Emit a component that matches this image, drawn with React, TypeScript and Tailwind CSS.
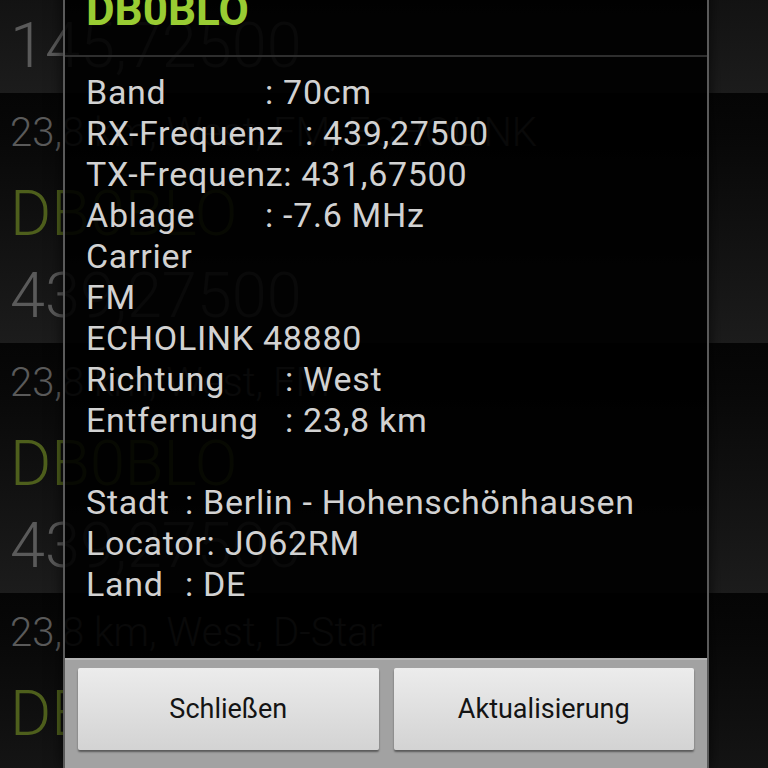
import { FC } from "react";

interface RowProps {
  info: string;
  call: string;
  freq: string;
}

const ListRow: FC<RowProps> = ({ info, call, freq }) => (
  <div className="h-[250px] shrink-0 pl-[10px] bg-gradient-to-b from-[#050505] to-[#1c1c1c] font-light whitespace-nowrap">
    <div className="h-[80px] leading-[80px] text-[40px] text-[#5a5a5a]">{info}</div>
    <div className="h-[82px] leading-[82px] text-[63px] text-[#4e5f1c]">{call}</div>
    <div className="h-[82px] leading-[82px] text-[63px] text-[#5a5a5a]">{freq}</div>
  </div>
);

const rows: RowProps[] = [
  { info: "23,8 km, West, FM", call: "DB0BLO", freq: "145,72500" },
  { info: "23,8 km, West, FM, ECHOLINK", call: "DB0BLO", freq: "439,27500" },
  { info: "23,8 km, West, FM", call: "DB0BLO", freq: "439,27500" },
  { info: "23,8 km, West, D-Star", call: "DB0BLO", freq: "439,40000" },
];

// label column widths are what lines the colons up
const details: { label?: string; w?: string; value?: string; text?: string }[] = [
  { label: "Band", w: "w-[179px]", value: "70cm" },
  { label: "RX-Frequenz", w: "w-[219px]", value: "439,27500" },
  { label: "TX-Frequenz", value: "431,67500" },
  { label: "Ablage", w: "w-[179px]", value: "-7.6 MHz" },
  { text: "Carrier" },
  { text: "FM" },
  { text: "ECHOLINK 48880" },
  { label: "Richtung", w: "w-[199px]", value: "West" },
  { label: "Entfernung", w: "w-[199px]", value: "23,8 km" },
  { text: "" },
  { label: "Stadt", w: "w-[99px]", value: "Berlin - Hohenschönhausen" },
  { label: "Locator", value: "JO62RM" },
  { label: "Land", w: "w-[99px]", value: "DE" },
];

const DialogButton: FC<{ label: string }> = ({ label }) => (
  <button className="flex-1 h-[82px] rounded-[2px] bg-gradient-to-b from-[#ececec] to-[#d3d3d3] shadow-[0_2px_2px_rgba(0,0,0,0.45)] text-[27px] text-[#141414]">
    {label}
  </button>
);

const App: FC = () => {
  return (
    <div className="relative w-[768px] h-[768px] overflow-hidden bg-black font-['Roboto',sans-serif]">
      <div className="flex flex-col mt-[-157px]">
        {rows.map((r, i) => (
          <ListRow key={i} {...r} />
        ))}
      </div>

      <div className="absolute left-[63px] w-[646px] top-[-40px] bottom-0 flex flex-col border-x-2 border-[#5a5a5a] shadow-[0_0_14px_rgba(0,0,0,0.7)]">
        <div className="h-[95px] shrink-0 bg-black/90 px-[21px] flex items-end pb-[23px]">
          <span className="text-[44px] leading-none font-bold text-[#99cc33]">DB0BLO</span>
        </div>
        <div className="h-[2px] bg-[#2e2e2e] shrink-0" />
        <div className="flex-1 bg-black/90 pl-[21px] pt-[15px] text-[34px] leading-[41px] tracking-[0.7px] text-[#d2d2d2] whitespace-pre">
          {details.map((d, i) => (
            <div key={i} className="h-[41px]">
              {d.label !== undefined ? (
                <>
                  <span className={`inline-block ${d.w ?? ""}`}>{d.label}</span>
                  <span>{`: ${d.value}`}</span>
                </>
              ) : (
                d.text
              )}
            </div>
          ))}
        </div>
        <div className="h-[110px] shrink-0 bg-[#a2a2a2] border-t-2 border-[#b4b4b4] px-[13px] pt-[8px] flex gap-[15px]">
          <DialogButton label="Schließen" />
          <DialogButton label="Aktualisierung" />
        </div>
      </div>
    </div>
  );
};

export default App;
